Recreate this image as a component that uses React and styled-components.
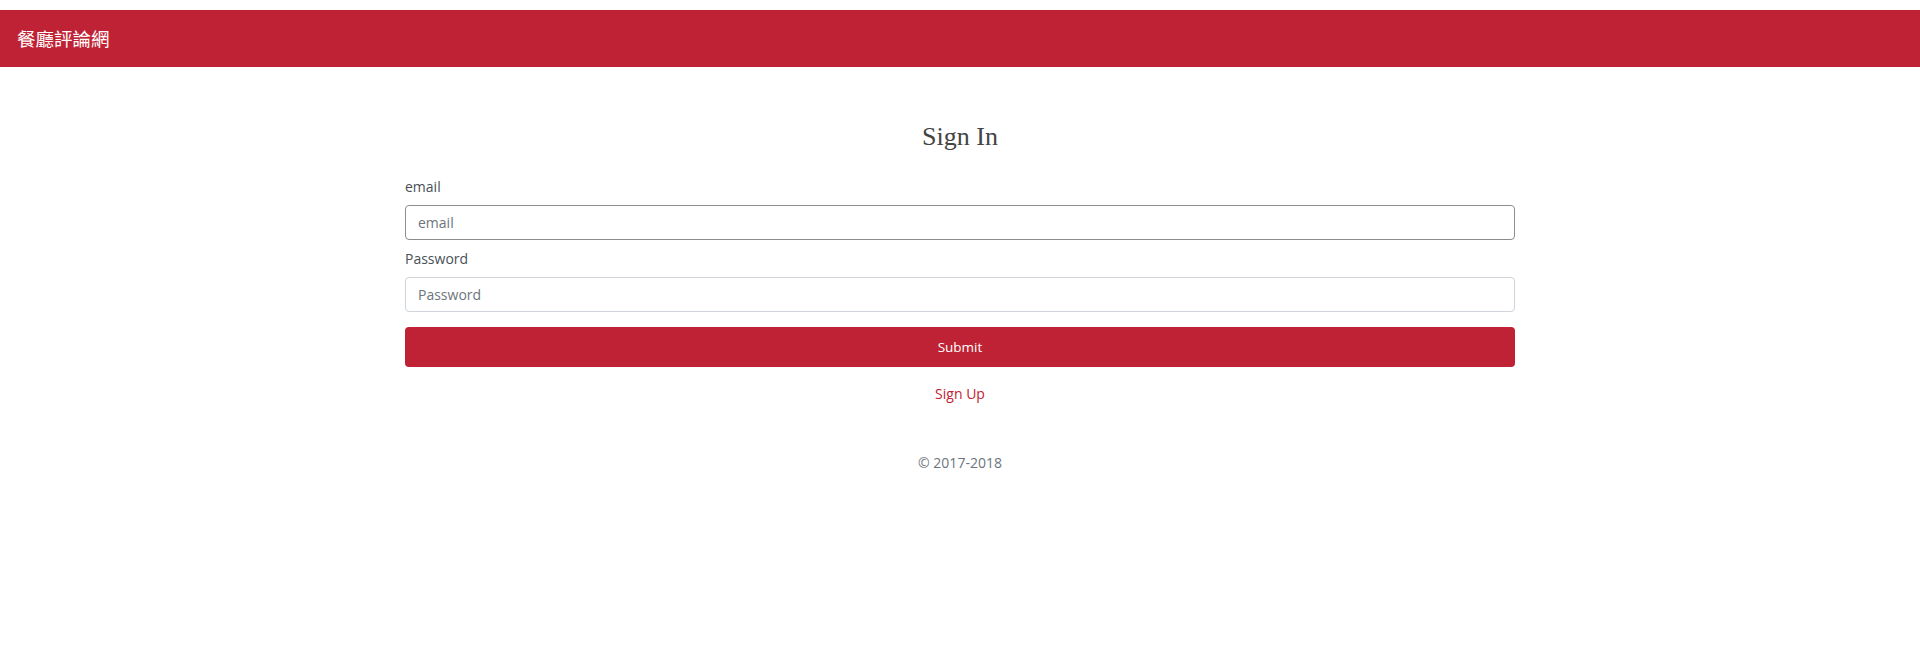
import styled, { createGlobalStyle } from 'styled-components';

const GlobalStyle = createGlobalStyle`
	* {
		box-sizing: border-box;
	}

	body {
		margin: 0;
		padding-top: 10px;
		background: #fff;
		font-family: "Open Sans", "Noto Sans", "Noto Sans CJK TC", sans-serif;
		font-size: 14px;
		line-height: 1.5;
		color: #495057;
	}
`;

const Navbar = styled.nav`
	display: flex;
	align-items: center;
	height: 57px;
	padding: 0 17px;
	background-color: #bf2234;
`;

const Brand = styled.a`
	font-family: "Noto Sans CJK TC", "Noto Sans", sans-serif;
	font-size: 18.5px;
	line-height: 1;
	color: #fff;
	text-decoration: none;
`;

const Container = styled.main`
	max-width: 1140px;
	margin: 0 auto;
	padding: 54px 15px 0;
`;

const Title = styled.h1`
	margin: 0 0 24px;
	font-family: "Liberation Serif", "Times New Roman", serif;
	font-size: 26px;
	font-weight: normal;
	line-height: 1.2;
	text-align: center;
	color: #444;
`;

const FormGroup = styled.div`
	display: flex;
	flex-direction: column;
	margin-bottom: 8px;
`;

const Label = styled.label`
	margin-bottom: 8px;
	line-height: 21px;
`;

const Input = styled.input`
	height: 35px;
	padding: 6px 12px;
	font-family: inherit;
	font-size: 14px;
	color: #495057;
	border: 1px solid ${({ $focused }) => ($focused ? '#8d8d8d' : '#ced4da')};
	border-radius: 4px;
	outline: none;

	&::placeholder {
		color: #6c757d;
	}
`;

const SubmitButton = styled.button`
	width: 100%;
	height: 40px;
	margin-top: 7px;
	font-family: inherit;
	font-size: 13.5px;
	color: #fff;
	background-color: #bf2234;
	border: none;
	border-radius: 4px;
	cursor: pointer;
`;

const SignUp = styled.a`
	display: block;
	margin-top: 16px;
	text-align: center;
	color: #bf2234;
	text-decoration: none;
`;

const Copyright = styled.p`
	margin: 48px 0 0;
	text-align: center;
	color: #6c757d;
`;

export default function App() {
	return (
		<>
			<GlobalStyle />
			<Navbar>
				<Brand href="#">餐廳評論網</Brand>
			</Navbar>
			<Container>
				<form onSubmit={(e) => e.preventDefault()}>
					<Title>Sign In</Title>
					<FormGroup>
						<Label htmlFor="email">email</Label>
						<Input id="email" type="email" placeholder="email" $focused />
					</FormGroup>
					<FormGroup>
						<Label htmlFor="password">Password</Label>
						<Input id="password" type="password" placeholder="Password" />
					</FormGroup>
					<SubmitButton type="submit">Submit</SubmitButton>
					<SignUp href="#">Sign Up</SignUp>
					<Copyright>© 2017-2018</Copyright>
				</form>
			</Container>
		</>
	);
}
